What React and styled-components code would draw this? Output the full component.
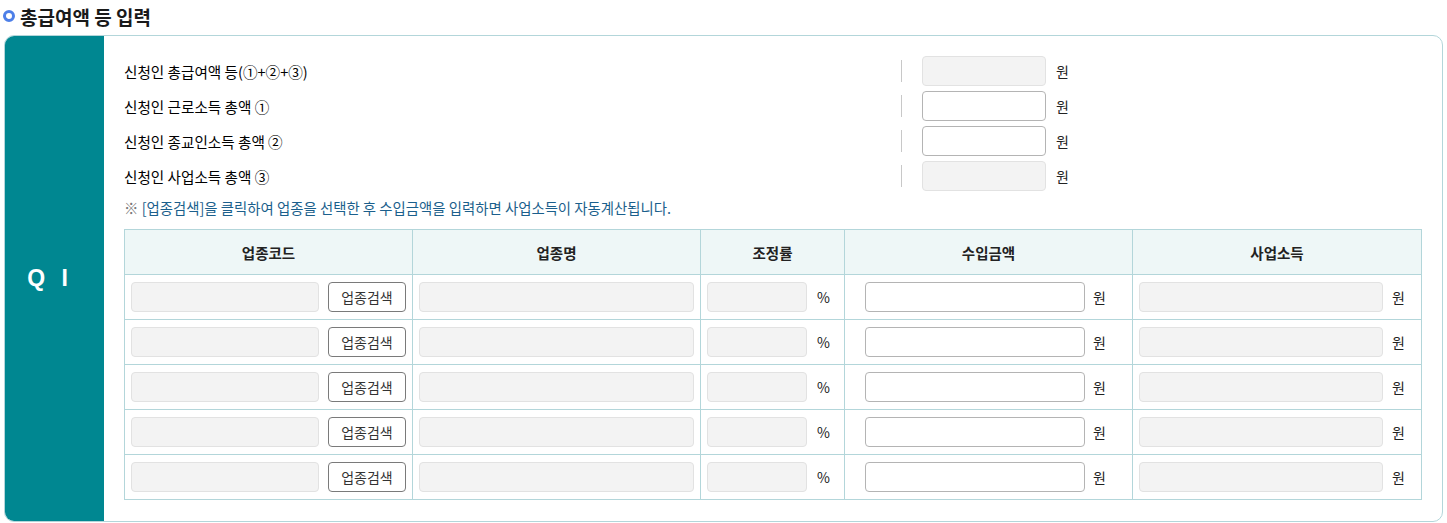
import React from 'react';
import styled, { createGlobalStyle } from 'styled-components';

const GlobalStyle = createGlobalStyle`
  body {
    margin: 0;
    background: #fff;
    font-family: "Noto Sans CJK KR", "Noto Sans", sans-serif;
    color: #222;
  }
`;

const Page = styled.div`
  padding: 2px 4px 0 4px;
`;

const TitleRow = styled.h2`
  display: flex;
  align-items: center;
  gap: 5px;
  margin: 0 0 5px -1px;
  height: 28px;
  font-size: 19px;
  font-weight: 700;
  color: #1a1a1a;
`;

const Bullet = styled.span`
  width: 6px;
  height: 6px;
  border: 3px solid #4d7fe8;
  border-radius: 50%;
  background: #fff;
`;

const Card = styled.div`
  display: flex;
  width: 1439px;
  height: 487px;
  box-sizing: border-box;
  border: 1px solid #b3d6da;
  border-radius: 10px;
  overflow: hidden;
`;

const Side = styled.div`
  width: 99px;
  flex: none;
  background: #008791;
  color: #fff;
  display: flex;
  align-items: center;
  justify-content: center;
  font-family: "Liberation Sans", Arial, sans-serif;
  font-size: 23px;
  font-weight: 700;
  letter-spacing: 5px;
  padding-right: 9px;
  box-sizing: border-box;
  white-space: pre;
`;

const Body = styled.div`
  flex: 1;
  padding: 20px 20px 0 20px;
`;

const FieldRow = styled.div`
  display: flex;
  align-items: center;
  height: 30px;
  margin-bottom: 5px;
`;

const FieldLabel = styled.div`
  width: 777px;
  font-size: 14.6px;
  font-weight: 400;
  color: #000;
`;

const Divider = styled.span`
  width: 1px;
  height: 22px;
  background: #c8c8c8;
  margin-right: 20px;
`;

const Input = styled.input`
  box-sizing: border-box;
  height: 30px;
  width: ${(p) => p.$w || '100%'};
  border-radius: 4px;
  border: 1px solid ${(p) => (p.disabled ? '#e2e2e2' : '#b4b4b4')};
  background: ${(p) => (p.disabled ? '#f3f3f3' : '#fff')};
  flex: ${(p) => (p.$w ? 'none' : '1')};
  outline: none;
`;

const Unit = styled.span`
  font-size: 14px;
  color: #222;
  margin-left: ${(p) => p.$gap || 10}px;
  flex: none;
`;

const Note = styled.p`
  margin: 6px 0 0 0;
  height: 32px;
  font-size: 14.4px;
  color: #1b5f8c;
  span {
    color: #777;
  }
`;

const Table = styled.table`
  width: 1297px;
  border-collapse: collapse;
  table-layout: fixed;
`;

const Th = styled.th`
  height: 45px;
  padding: 0;
  box-sizing: border-box;
  background: #eef7f7;
  border: 1px solid #b3d6da;
  font-size: 14.5px;
  font-weight: 700;
  color: #222;
`;

const Td = styled.td`
  height: 45px;
  border: 1px solid #b3d6da;
  padding: 0 ${(p) => p.$pr ?? 6}px 0 ${(p) => p.$pl ?? 6}px;
  box-sizing: border-box;
`;

const Cell = styled.div`
  display: flex;
  align-items: center;
`;

const SearchButton = styled.button`
  flex: none;
  box-sizing: border-box;
  width: 78px;
  height: 30px;
  margin-left: 9px;
  border: 1px solid #7a7a7a;
  border-radius: 4px;
  background: #fff;
  font-family: inherit;
  font-size: 14px;
  color: #333;
  padding: 0;
`;

const fields = [
  { label: '신청인 총급여액 등(①+②+③)', disabled: true },
  { label: '신청인 근로소득 총액 ①', disabled: false },
  { label: '신청인 종교인소득 총액 ②', disabled: false },
  { label: '신청인 사업소득 총액 ③', disabled: true },
];

const rows = [0, 1, 2, 3, 4];

export default function App() {
  return (
    <Page>
      <GlobalStyle />
      <TitleRow>
        <Bullet />
        총급여액 등 입력
      </TitleRow>
      <Card>
        <Side>Q I</Side>
        <Body>
          {fields.map((f) => (
            <FieldRow key={f.label}>
              <FieldLabel>{f.label}</FieldLabel>
              <Divider />
              <Input $w="124px" disabled={f.disabled} />
              <Unit>원</Unit>
            </FieldRow>
          ))}
          <Note>
            <span>※</span> [업종검색]을 클릭하여 업종을 선택한 후 수입금액을 입력하면 사업소득이 자동계산됩니다.
          </Note>
          <Table>
            <colgroup>
              <col style={{ width: '288px' }} />
              <col style={{ width: '288px' }} />
              <col style={{ width: '144px' }} />
              <col style={{ width: '288px' }} />
              <col style={{ width: '289px' }} />
            </colgroup>
            <thead>
              <tr>
                <Th>업종코드</Th>
                <Th>업종명</Th>
                <Th>조정률</Th>
                <Th>수입금액</Th>
                <Th>사업소득</Th>
              </tr>
            </thead>
            <tbody>
              {rows.map((r) => (
                <tr key={r}>
                  <Td>
                    <Cell>
                      <Input disabled />
                      <SearchButton>업종검색</SearchButton>
                    </Cell>
                  </Td>
                  <Td>
                    <Cell>
                      <Input disabled />
                    </Cell>
                  </Td>
                  <Td>
                    <Cell>
                      <Input $w="100px" disabled />
                      <Unit>%</Unit>
                    </Cell>
                  </Td>
                  <Td $pl={20}>
                    <Cell>
                      <Input $w="220px" />
                      <Unit $gap={8}>원</Unit>
                    </Cell>
                  </Td>
                  <Td $pr={16}>
                    <Cell>
                      <Input disabled />
                      <Unit $gap={9}>원</Unit>
                    </Cell>
                  </Td>
                </tr>
              ))}
            </tbody>
          </Table>
        </Body>
      </Card>
    </Page>
  );
}
